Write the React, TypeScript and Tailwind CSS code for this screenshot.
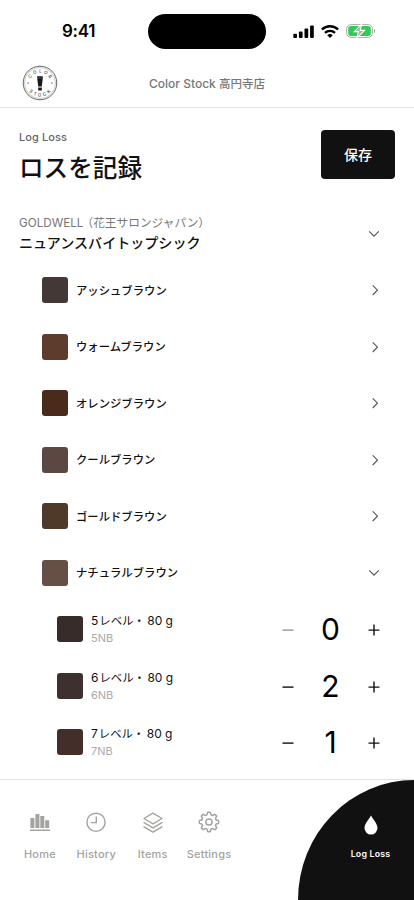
import React from "react";

const shades = [
  { name: "アッシュブラウン", color: "bg-[#433836]" },
  { name: "ウォームブラウン", color: "bg-[#5e3c2d]" },
  { name: "オレンジブラウン", color: "bg-[#4a2a1b]" },
  { name: "クールブラウン", color: "bg-[#5b4842]" },
  { name: "ゴールドブラウン", color: "bg-[#4f3929]" },
  { name: "ナチュラルブラウン", color: "bg-[#664f44]", open: true },
];

const items = [
  { level: "5", code: "5NB", count: 0, color: "bg-[#382c2a]" },
  { level: "6", code: "6NB", count: 2, color: "bg-[#3d302f]" },
  { level: "7", code: "7NB", count: 1, color: "bg-[#432f29]" },
];

function Chevron({ open }: { open?: boolean }) {
  return (
    <svg viewBox="0 0 12 12" className="w-3 h-3" fill="none" stroke="#555" strokeWidth="1.1">
      <path d={open ? "M1.2 3.4l4.8 4.8 4.8-4.8" : "M3.7 1.4l4.8 4.8-4.8 4.8"} />
    </svg>
  );
}

function Logo() {
  return (
    <svg viewBox="0 0 36 36" className="w-9 h-9" fill="none">
      <circle cx="18" cy="18" r="16.8" stroke="#666" strokeWidth="1" />
      <circle cx="18" cy="18" r="15.5" stroke="#999" strokeWidth="0.5" />
      <path id="logo-top" d="M7.6 18a10.4 10.4 0 0 1 20.8 0" />
      <path id="logo-bottom" d="M4.4 18a13.6 13.6 0 0 0 27.2 0" />
      <g fill="#444" fontSize="4.5" fontWeight="500" textAnchor="middle">
        <text letterSpacing="2">
          <textPath href="#logo-top" startOffset="53%">COLOR</textPath>
        </text>
        <text letterSpacing="2.3">
          <textPath href="#logo-bottom" startOffset="53%">STOCK</textPath>
        </text>
      </g>
      <path d="M15.2 11.3h5.6v2l-1 8.2h-3.6l-1-8.2zM16.2 22.5h3.6v3h-3.6z" fill="#181818" />
      <path d="M15.3 13h5.4" stroke="#aaa" strokeWidth="0.4" />
      <circle cx="6" cy="18" r="0.65" fill="#444" />
      <circle cx="30" cy="18" r="0.65" fill="#444" />
    </svg>
  );
}

function StatusBar() {
  return (
    <div className="h-[62px] shrink-0 flex items-center">
      <div className="w-[148px] pl-[62px] text-[17px] leading-5 font-semibold tracking-[-0.3px] text-black">9:41</div>
      <div className="w-[118px] h-[35px] rounded-full bg-black" />
      <div className="ml-[27px] flex items-center">
        <svg viewBox="0 0 21 13" className="w-[21px] h-[13px]">
          <rect x="0.3" y="8.7" width="3.7" height="4.3" rx="1" />
          <rect x="5.9" y="6.4" width="3.7" height="6.6" rx="1" />
          <rect x="11.5" y="3.6" width="3.7" height="9.4" rx="1" />
          <rect x="17.1" y="0.5" width="3.7" height="12.5" rx="1" />
        </svg>
        <svg viewBox="0 0 18 13" className="w-[18px] h-[13px] ml-[7px]" fill="none" stroke="#000" strokeWidth="2.4">
          <path d="M.9 4.5a11.6 11.6 0 0 1 16.2 0M4 7.9a7.3 7.3 0 0 1 10 0" />
          <path d="M6.2 10.3a4.2 4.2 0 0 1 5.6 0L9 13z" fill="#000" stroke="none" />
        </svg>
        <svg viewBox="0 0 30 14" className="w-[30px] h-[14px] ml-[7px]" fill="none">
          <rect x="0.6" y="0.6" width="25.8" height="12.8" rx="4.2" stroke="#aaa" strokeWidth="1" />
          <rect x="2.2" y="2.1" width="22.6" height="9.8" rx="2.7" fill="#34c759" />
          <path d="M15.7.2L8.3 7.6h4.1L10.9 13.8l7.7-7.4h-4.4z" fill="#aaa" stroke="#fff" strokeWidth="1.1" />
          <path d="M28 4.8v4.4c1.7-.7 1.7-3.7 0-4.4z" fill="#aaa" />
        </svg>
      </div>
    </div>
  );
}

function BarsIcon() {
  return (
    <svg viewBox="0 0 22 22" className="w-[22px] h-[22px]" fill="currentColor">
      <rect x="1.4" y="7" width="4" height="10" rx="0.5" />
      <rect x="6.4" y="3" width="4" height="14" rx="0.5" />
      <rect x="11.3" y="5" width="4" height="12" rx="0.5" />
      <rect x="16.2" y="9.2" width="4" height="7.8" rx="0.5" />
      <rect x="0.8" y="18.4" width="20.4" height="1.6" rx="0.4" />
    </svg>
  );
}

function ClockIcon() {
  return (
    <svg viewBox="0 0 22 22" className="w-[22px] h-[22px]" fill="none" stroke="currentColor" strokeWidth="1.4">
      <circle cx="11" cy="11.3" r="9.1" />
      <path d="M11.3 5.4v6.2H5.8" />
    </svg>
  );
}

function StackIcon() {
  return (
    <svg viewBox="0 0 22 22" className="w-[22px] h-[22px]" fill="none" stroke="currentColor" strokeWidth="1.4" strokeLinejoin="round" strokeLinecap="round">
      <path d="M11 2.2l9 5.3-9 5.3-9-5.3z" />
      <path d="M2 11.7l9 5.2 9-5.2M2 15.8l9 5.3 9-5.3" />
    </svg>
  );
}

// eight teeth with rounded corners, one tooth per 45 degrees
const gearPath =
  Array.from({ length: 8 }, (_, i) => {
    const at = (r: number, deg: number) => {
      const a = ((i * 45 + deg - 90) * Math.PI) / 180;
      return `${(11 + r * Math.cos(a)).toFixed(2)} ${(11 + r * Math.sin(a)).toFixed(2)}`;
    };
    return `${i ? "L" : "M"}${at(8, -12)}L${at(9, -10.5)}Q${at(9.7, -9)} ${at(9.7, -6)}L${at(9.7, 6)}Q${at(9.7, 9)} ${at(9, 10.5)}L${at(8, 12)}Q${at(6.6, 22.5)} ${at(8, 33)}`;
  }).join("") + "Z";

function GearIcon() {
  return (
    <svg viewBox="0 0 22 22" className="w-[22px] h-[22px]" fill="none" stroke="currentColor" strokeWidth="1.5" strokeLinejoin="round">
      <path d={gearPath} />
      <circle cx="11" cy="11" r="3.1" />
    </svg>
  );
}

const tabs = [
  { label: "Home", icon: <BarsIcon /> },
  { label: "History", icon: <ClockIcon /> },
  { label: "Items", icon: <StackIcon /> },
  { label: "Settings", icon: <GearIcon /> },
];

export default function App() {
  return (
    <div className="w-[414px] h-[900px] flex flex-col overflow-hidden bg-white text-[#111] font-['Inter','Noto_Sans_CJK_JP',sans-serif]">
      <StatusBar />

      {/* Shop header */}
      <header className="h-[46px] shrink-0 border-b border-[#e5e5e5] grid grid-cols-[1fr_auto_1fr] items-center pl-[22px]">
        <div className="-mt-[3px]">
          <Logo />
        </div>
        <div className="text-[12px] leading-4 -mt-[2px] font-medium text-[#777] whitespace-nowrap -translate-x-[11px]">
          Color Stock <span className="text-[11.5px]">高円寺店</span>
        </div>
      </header>

      <main className="flex-1 min-h-0">
        {/* Page title */}
        <div className="pt-[22px] pl-[19px] pr-[19px] flex justify-between">
          <div>
            <p className="text-[11px] leading-[14px] font-medium text-[#666] tracking-[0.1px]">Log Loss</p>
            <h1 className="text-[24.6px] leading-9 mt-[6px] font-medium">ロスを記録</h1>
          </div>
          <button className="w-[74px] h-[49px] rounded bg-[#111] text-white text-[14px] font-medium">保存</button>
        </div>

        {/* Brand */}
        <div className="mt-[28px] pl-[19px] pr-[34px] flex items-center justify-between">
          <div>
            <p className="text-[11.7px] leading-[18px] text-[#777]">
              GOLDWELL<span className="-ml-[2px]">（花王サロンジャパン）</span>
            </p>
            <p className="text-[14.05px] leading-[21px] font-medium">ニュアンスバイトップシック</p>
          </div>
          <Chevron open />
        </div>

        <ul className="mt-[9px]">
          {shades.map((shade) => (
            <li key={shade.name} className="h-[56.5px] pl-[42px] pr-[33px] flex items-center">
              <span className={`w-[26px] h-[26px] rounded-[3px] ${shade.color}`} />
              <span className="ml-[8px] pt-[2px] flex-1 text-[11.35px] font-medium">{shade.name}</span>
              <span className={shade.open ? "pr-px" : ""}>
                <Chevron open={shade.open} />
              </span>
            </li>
          ))}
          {items.map((item) => (
            <li key={item.code} className="h-[56.5px] pl-[57px] pr-[34px] flex items-center">
              <span className={`w-[26px] h-[26px] rounded-[3px] ${item.color}`} />
              <div className="ml-2 flex-1">
                <p className="text-[12px] leading-[17px] pt-px whitespace-nowrap">
                  {item.level}
                  <span className="ml-[1px] -mr-[1px] text-[11.4px]">レベル・</span> 80 g
                </p>
                <p className="text-[11px] leading-[17px] text-[#aaa]">{item.code}</p>
              </div>
              <svg viewBox="0 0 12 12" className="w-3 h-3" stroke={item.count ? "#111" : "#999"} strokeWidth="1.4">
                <path d="M.5 7.1h11" />
              </svg>
              <span className="w-[74px] pr-[1px] text-center text-[30px] leading-9 text-black">{item.count}</span>
              <svg viewBox="0 0 12 12" className="w-3 h-3 overflow-visible" stroke="#111" strokeWidth="1.4">
                <path d="M.5 7.1h11M6 1.6v11" />
              </svg>
            </li>
          ))}
        </ul>
      </main>

      {/* Tab bar */}
      <nav className="relative z-10 h-[121px] shrink-0 border-t border-[#e2e2e2] bg-white flex justify-between">
        <div className="pl-[11.7px] pt-[31px] flex">
          {tabs.map((tab) => (
            <div key={tab.label} className="w-[56.4px] flex flex-col items-center text-[#a3a3a0]">
              {tab.icon}
              <span className="mt-[13px] text-[11px] leading-4 font-medium tracking-[0.2px]">{tab.label}</span>
            </div>
          ))}
        </div>
        <div className="w-[116px] h-[120px] rounded-tl-[116px_120px] bg-[#111] text-white flex flex-col items-center pt-[35px] pl-[29px]">
          <svg viewBox="0 0 14 20" className="w-[14px] h-[20px]" fill="currentColor">
            <path d="M7 .5C5.8 3.2.5 8.4.5 13.1a6.5 6.5 0 0 0 13 0C13.5 8.4 8.2 3.2 7 .5z" />
          </svg>
          <span className="mt-[11px] text-[8.8px] leading-4 font-semibold tracking-[0.2px]">Log Loss</span>
        </div>
      </nav>
    </div>
  );
}
